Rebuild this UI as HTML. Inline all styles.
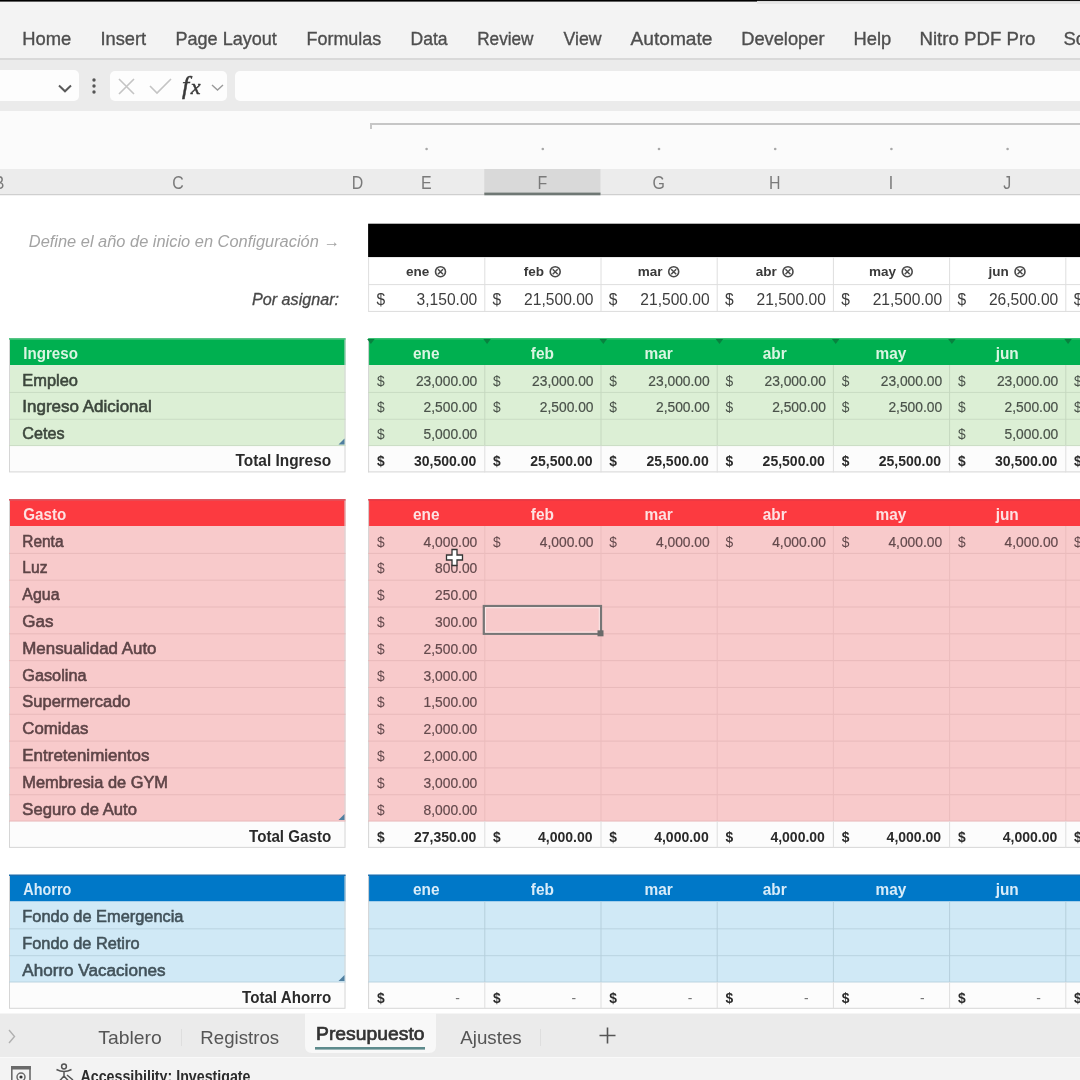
<!DOCTYPE html>
<html><head><meta charset="utf-8"><title>Presupuesto - Excel</title>
<style>
html,body{margin:0;padding:0;background:#fff;width:1080px;height:1080px;overflow:hidden;}
svg{display:block;filter:blur(0.45px);font-family:"Liberation Sans",sans-serif;}
</style></head><body>
<svg width="1080" height="1080" viewBox="0 0 1080 1080">
<rect x="0.00" y="0.00" width="1080.00" height="1080.00" fill="#ffffff" />
<rect x="0.00" y="0.00" width="1080.00" height="59.00" fill="#f3f3f3" />
<rect x="0.00" y="0.00" width="757.00" height="1.60" fill="#000000" />
<rect x="757.00" y="0.00" width="323.00" height="1.10" fill="#111111" />
<rect x="757.00" y="2.00" width="323.00" height="2.00" fill="#e6e6e6" />
<text x="22.20" y="45.00" font-size="18.5" fill="#4e4e4e" textLength="49.00" lengthAdjust="spacingAndGlyphs" stroke="#4e4e4e" stroke-width="0.35">Home</text>
<text x="100.50" y="45.00" font-size="18.5" fill="#4e4e4e" textLength="45.70" lengthAdjust="spacingAndGlyphs" stroke="#4e4e4e" stroke-width="0.35">Insert</text>
<text x="175.50" y="45.00" font-size="18.5" fill="#4e4e4e" textLength="101.30" lengthAdjust="spacingAndGlyphs" stroke="#4e4e4e" stroke-width="0.35">Page Layout</text>
<text x="306.50" y="45.00" font-size="18.5" fill="#4e4e4e" textLength="74.70" lengthAdjust="spacingAndGlyphs" stroke="#4e4e4e" stroke-width="0.35">Formulas</text>
<text x="410.50" y="45.00" font-size="18.5" fill="#4e4e4e" textLength="37.00" lengthAdjust="spacingAndGlyphs" stroke="#4e4e4e" stroke-width="0.35">Data</text>
<text x="477.20" y="45.00" font-size="18.5" fill="#4e4e4e" textLength="56.30" lengthAdjust="spacingAndGlyphs" stroke="#4e4e4e" stroke-width="0.35">Review</text>
<text x="563.50" y="45.00" font-size="18.5" fill="#4e4e4e" textLength="38.00" lengthAdjust="spacingAndGlyphs" stroke="#4e4e4e" stroke-width="0.35">View</text>
<text x="630.50" y="45.00" font-size="18.5" fill="#4e4e4e" textLength="82.00" lengthAdjust="spacingAndGlyphs" stroke="#4e4e4e" stroke-width="0.35">Automate</text>
<text x="741.20" y="45.00" font-size="18.5" fill="#4e4e4e" textLength="83.30" lengthAdjust="spacingAndGlyphs" stroke="#4e4e4e" stroke-width="0.35">Developer</text>
<text x="853.50" y="45.00" font-size="18.5" fill="#4e4e4e" textLength="37.70" lengthAdjust="spacingAndGlyphs" stroke="#4e4e4e" stroke-width="0.35">Help</text>
<text x="919.50" y="45.00" font-size="18.5" fill="#4e4e4e" textLength="116.00" lengthAdjust="spacingAndGlyphs" stroke="#4e4e4e" stroke-width="0.35">Nitro PDF Pro</text>
<text x="1063.50" y="45.00" font-size="18.5" fill="#4e4e4e" stroke="#4e4e4e" stroke-width="0.35">Sc</text>
<rect x="0.00" y="58.00" width="1080.00" height="2.00" fill="#d9d9d9" />
<rect x="0.00" y="60.00" width="1080.00" height="51.00" fill="#ebebeb" />
<rect x="-6" y="70" width="85" height="31" rx="5" fill="#fdfdfd"/>
<path d="M59 85.5 L65 91.3 L71 85.5" fill="none" stroke="#5a5a5a" stroke-width="2"/>
<circle cx="94" cy="80" r="1.7" fill="#555"/>
<circle cx="94" cy="86" r="1.7" fill="#555"/>
<circle cx="94" cy="92" r="1.7" fill="#555"/>
<rect x="110" y="71" width="117" height="30" rx="5" fill="#fdfdfd"/>
<path d="M119 79 L134 94 M134 79 L119 94" stroke="#c4c4c4" stroke-width="1.6" fill="none"/>
<path d="M150 86 L157 93 L171 79" stroke="#c4c4c4" stroke-width="1.6" fill="none"/>
<text x="182" y="94" font-family="Liberation Serif" font-style="italic" fill="#3a3a3a" stroke="#3a3a3a" stroke-width="0.5"><tspan font-size="26">f</tspan><tspan font-size="22" dx="1.5">x</tspan></text>
<path d="M212 85 L217.5 90 L223 85" fill="none" stroke="#9a9a9a" stroke-width="1.4"/>
<rect x="235" y="71" width="860" height="30" rx="5" fill="#fdfdfd"/>
<rect x="0.00" y="111.00" width="1080.00" height="58.00" fill="#fbfbfb" />
<rect x="370.00" y="123.00" width="710.00" height="2.00" fill="#c6c6c6" />
<rect x="370.00" y="123.00" width="2.00" height="6.00" fill="#c6c6c6" />
<circle cx="426.6" cy="149" r="1.3" fill="#a8a8a8"/>
<circle cx="542.8" cy="149" r="1.3" fill="#a8a8a8"/>
<circle cx="659.0" cy="149" r="1.3" fill="#a8a8a8"/>
<circle cx="775.2" cy="149" r="1.3" fill="#a8a8a8"/>
<circle cx="891.4" cy="149" r="1.3" fill="#a8a8a8"/>
<circle cx="1007.6" cy="149" r="1.3" fill="#a8a8a8"/>
<rect x="0.00" y="169.00" width="1080.00" height="26.00" fill="#ececec" />
<rect x="0.00" y="194.00" width="1080.00" height="1.50" fill="#cfcfcf" />
<rect x="484.30" y="169.00" width="116.20" height="26.00" fill="#d9d9d9" />
<rect x="484.30" y="192.60" width="116.20" height="3.00" fill="#6f7874" />
<text x="-1.00" y="189.00" font-size="18.5" fill="#7a7a7a" text-anchor="middle" textLength="10.61" lengthAdjust="spacingAndGlyphs" >B</text>
<text x="178.00" y="189.00" font-size="18.5" fill="#7a7a7a" text-anchor="middle" textLength="11.49" lengthAdjust="spacingAndGlyphs" >C</text>
<text x="357.50" y="189.00" font-size="18.5" fill="#7a7a7a" text-anchor="middle" textLength="11.49" lengthAdjust="spacingAndGlyphs" >D</text>
<text x="426.20" y="189.00" font-size="18.5" fill="#7a7a7a" text-anchor="middle" textLength="10.61" lengthAdjust="spacingAndGlyphs" >E</text>
<text x="542.40" y="189.00" font-size="18.5" fill="#7a7a7a" text-anchor="middle" textLength="9.72" lengthAdjust="spacingAndGlyphs" >F</text>
<text x="658.60" y="189.00" font-size="18.5" fill="#7a7a7a" text-anchor="middle" textLength="12.38" lengthAdjust="spacingAndGlyphs" >G</text>
<text x="774.80" y="189.00" font-size="18.5" fill="#7a7a7a" text-anchor="middle" textLength="11.49" lengthAdjust="spacingAndGlyphs" >H</text>
<text x="891.00" y="189.00" font-size="18.5" fill="#7a7a7a" text-anchor="middle" textLength="4.42" lengthAdjust="spacingAndGlyphs" >I</text>
<text x="1007.20" y="189.00" font-size="18.5" fill="#7a7a7a" text-anchor="middle" textLength="7.96" lengthAdjust="spacingAndGlyphs" >J</text>
<rect x="0.00" y="195.50" width="1080.00" height="817.00" fill="#ffffff" />
<rect x="368.10" y="223.70" width="711.90" height="33.60" fill="#000000" />
<text x="28.80" y="246.50" font-size="16.3" fill="#a3a3a3" font-style="italic" textLength="311.00" lengthAdjust="spacingAndGlyphs" >Define el año de inicio en Configuración →</text>
<text x="339.00" y="305.00" font-size="16.3" fill="#474747" font-style="italic" text-anchor="end" textLength="87.00" lengthAdjust="spacingAndGlyphs" stroke="#474747" stroke-width="0.3">Por asignar:</text>
<rect x="368.10" y="257.30" width="711.90" height="54.10" fill="#ffffff" />
<line x1="368.10" y1="284.60" x2="1080.00" y2="284.60" stroke="#dedede" stroke-width="1" />
<line x1="368.10" y1="311.40" x2="1080.00" y2="311.40" stroke="#dcdcdc" stroke-width="1" />
<line x1="368.60" y1="257.30" x2="368.60" y2="311.40" stroke="#dedede" stroke-width="1" />
<line x1="484.80" y1="257.30" x2="484.80" y2="311.40" stroke="#dedede" stroke-width="1" />
<line x1="601.00" y1="257.30" x2="601.00" y2="311.40" stroke="#dedede" stroke-width="1" />
<line x1="717.20" y1="257.30" x2="717.20" y2="311.40" stroke="#dedede" stroke-width="1" />
<line x1="833.40" y1="257.30" x2="833.40" y2="311.40" stroke="#dedede" stroke-width="1" />
<line x1="949.60" y1="257.30" x2="949.60" y2="311.40" stroke="#dedede" stroke-width="1" />
<line x1="1065.80" y1="257.30" x2="1065.80" y2="311.40" stroke="#dedede" stroke-width="1" />
<text x="406.07" y="276.00" font-size="13.5" fill="#3a3a3a" font-weight="bold" >ene</text>
<g transform="translate(440.5,271.7)"><circle r="5" fill="none" stroke="#4a4a4a" stroke-width="1.6"/><path d="M-2.5 -2.5 L2.5 2.5 M2.5 -2.5 L-2.5 2.5" stroke="#4a4a4a" stroke-width="1.5"/></g>
<text x="376.40" y="305.20" font-size="16.5" fill="#3e3e3e" textLength="8.68" lengthAdjust="spacingAndGlyphs" >$</text>
<text x="477.30" y="305.20" font-size="16.5" fill="#3e3e3e" text-anchor="end" textLength="60.72" lengthAdjust="spacingAndGlyphs" >3,150.00</text>
<text x="523.77" y="276.00" font-size="13.5" fill="#3a3a3a" font-weight="bold" >feb</text>
<g transform="translate(555.2,271.7)"><circle r="5" fill="none" stroke="#4a4a4a" stroke-width="1.6"/><path d="M-2.5 -2.5 L2.5 2.5 M2.5 -2.5 L-2.5 2.5" stroke="#4a4a4a" stroke-width="1.5"/></g>
<text x="492.60" y="305.20" font-size="16.5" fill="#3e3e3e" textLength="8.68" lengthAdjust="spacingAndGlyphs" >$</text>
<text x="593.50" y="305.20" font-size="16.5" fill="#3e3e3e" text-anchor="end" textLength="69.40" lengthAdjust="spacingAndGlyphs" >21,500.00</text>
<text x="637.72" y="276.00" font-size="13.5" fill="#3a3a3a" font-weight="bold" >mar</text>
<g transform="translate(673.7,271.7)"><circle r="5" fill="none" stroke="#4a4a4a" stroke-width="1.6"/><path d="M-2.5 -2.5 L2.5 2.5 M2.5 -2.5 L-2.5 2.5" stroke="#4a4a4a" stroke-width="1.5"/></g>
<text x="608.80" y="305.20" font-size="16.5" fill="#3e3e3e" textLength="8.68" lengthAdjust="spacingAndGlyphs" >$</text>
<text x="709.70" y="305.20" font-size="16.5" fill="#3e3e3e" text-anchor="end" textLength="69.40" lengthAdjust="spacingAndGlyphs" >21,500.00</text>
<text x="755.80" y="276.00" font-size="13.5" fill="#3a3a3a" font-weight="bold" >abr</text>
<g transform="translate(788.0,271.7)"><circle r="5" fill="none" stroke="#4a4a4a" stroke-width="1.6"/><path d="M-2.5 -2.5 L2.5 2.5 M2.5 -2.5 L-2.5 2.5" stroke="#4a4a4a" stroke-width="1.5"/></g>
<text x="725.00" y="305.20" font-size="16.5" fill="#3e3e3e" textLength="8.68" lengthAdjust="spacingAndGlyphs" >$</text>
<text x="825.90" y="305.20" font-size="16.5" fill="#3e3e3e" text-anchor="end" textLength="69.40" lengthAdjust="spacingAndGlyphs" >21,500.00</text>
<text x="868.99" y="276.00" font-size="13.5" fill="#3a3a3a" font-weight="bold" >may</text>
<g transform="translate(907.2,271.7)"><circle r="5" fill="none" stroke="#4a4a4a" stroke-width="1.6"/><path d="M-2.5 -2.5 L2.5 2.5 M2.5 -2.5 L-2.5 2.5" stroke="#4a4a4a" stroke-width="1.5"/></g>
<text x="841.20" y="305.20" font-size="16.5" fill="#3e3e3e" textLength="8.68" lengthAdjust="spacingAndGlyphs" >$</text>
<text x="942.10" y="305.20" font-size="16.5" fill="#3e3e3e" text-anchor="end" textLength="69.40" lengthAdjust="spacingAndGlyphs" >21,500.00</text>
<text x="988.58" y="276.00" font-size="13.5" fill="#3a3a3a" font-weight="bold" >jun</text>
<g transform="translate(1020.0,271.7)"><circle r="5" fill="none" stroke="#4a4a4a" stroke-width="1.6"/><path d="M-2.5 -2.5 L2.5 2.5 M2.5 -2.5 L-2.5 2.5" stroke="#4a4a4a" stroke-width="1.5"/></g>
<text x="957.40" y="305.20" font-size="16.5" fill="#3e3e3e" textLength="8.68" lengthAdjust="spacingAndGlyphs" >$</text>
<text x="1058.30" y="305.20" font-size="16.5" fill="#3e3e3e" text-anchor="end" textLength="69.40" lengthAdjust="spacingAndGlyphs" >26,500.00</text>
<text x="1073.80" y="305.20" font-size="15.6" fill="#3e3e3e" >$</text>
<rect x="9.00" y="338.30" width="336.50" height="26.82" fill="#00b050" />
<rect x="9.00" y="365.12" width="336.50" height="80.46" fill="#dcefd5" />
<rect x="9.00" y="445.58" width="336.50" height="26.82" fill="#fcfcfc" />
<rect x="9.50" y="338.80" width="335.50" height="133.10" fill="none" stroke="#d6d6d6" stroke-width="1"/>
<line x1="9.00" y1="392.44" x2="345.50" y2="392.44" stroke="#c9dcc3" stroke-width="1" />
<line x1="9.00" y1="419.26" x2="345.50" y2="419.26" stroke="#c9dcc3" stroke-width="1" />
<line x1="9.00" y1="445.58" x2="345.50" y2="445.58" stroke="#c9dcc3" stroke-width="1" />
<text x="23.30" y="358.60" font-size="17" fill="#daf5e2" font-weight="bold" textLength="54.60" lengthAdjust="spacingAndGlyphs" >Ingreso</text>
<text x="22.30" y="385.62" font-size="17" fill="#3c463c" textLength="55.70" lengthAdjust="spacingAndGlyphs" stroke="#3c463c" stroke-width="0.6">Empleo</text>
<text x="22.30" y="412.44" font-size="17" fill="#3c463c" stroke="#3c463c" stroke-width="0.6">Ingreso Adicional</text>
<text x="22.30" y="439.26" font-size="17" fill="#3c463c" textLength="42.20" lengthAdjust="spacingAndGlyphs" stroke="#3c463c" stroke-width="0.6">Cetes</text>
<text x="331.20" y="466.10" font-size="17" fill="#2a2a2a" font-weight="bold" text-anchor="end" textLength="95.70" lengthAdjust="spacingAndGlyphs" >Total Ingreso</text>
<rect x="368.10" y="338.30" width="711.90" height="26.82" fill="#00b050" />
<rect x="368.10" y="365.12" width="711.90" height="80.46" fill="#dcefd5" />
<rect x="368.10" y="445.58" width="711.90" height="26.82" fill="#fcfcfc" />
<line x1="368.60" y1="338.30" x2="368.60" y2="472.40" stroke="#d6d6d6" stroke-width="1"/>
<line x1="368.10" y1="392.44" x2="1080.00" y2="392.44" stroke="#c9dcc3" stroke-width="1" />
<line x1="368.10" y1="419.26" x2="1080.00" y2="419.26" stroke="#c9dcc3" stroke-width="1" />
<line x1="368.10" y1="445.58" x2="1080.00" y2="445.58" stroke="#c9dcc3" stroke-width="1" />
<line x1="368.10" y1="471.90" x2="1080.00" y2="471.90" stroke="#d6d6d6" stroke-width="1" />
<line x1="484.80" y1="365.12" x2="484.80" y2="445.58" stroke="#c5d8bf" stroke-width="1" />
<line x1="484.80" y1="445.58" x2="484.80" y2="472.40" stroke="#dedede" stroke-width="1" />
<line x1="601.00" y1="365.12" x2="601.00" y2="445.58" stroke="#c5d8bf" stroke-width="1" />
<line x1="601.00" y1="445.58" x2="601.00" y2="472.40" stroke="#dedede" stroke-width="1" />
<line x1="717.20" y1="365.12" x2="717.20" y2="445.58" stroke="#c5d8bf" stroke-width="1" />
<line x1="717.20" y1="445.58" x2="717.20" y2="472.40" stroke="#dedede" stroke-width="1" />
<line x1="833.40" y1="365.12" x2="833.40" y2="445.58" stroke="#c5d8bf" stroke-width="1" />
<line x1="833.40" y1="445.58" x2="833.40" y2="472.40" stroke="#dedede" stroke-width="1" />
<line x1="949.60" y1="365.12" x2="949.60" y2="445.58" stroke="#c5d8bf" stroke-width="1" />
<line x1="949.60" y1="445.58" x2="949.60" y2="472.40" stroke="#dedede" stroke-width="1" />
<line x1="1065.80" y1="365.12" x2="1065.80" y2="445.58" stroke="#c5d8bf" stroke-width="1" />
<line x1="1065.80" y1="445.58" x2="1065.80" y2="472.40" stroke="#dedede" stroke-width="1" />
<text x="426.20" y="358.60" font-size="17" fill="#daf5e2" font-weight="bold" text-anchor="middle" textLength="26.54" lengthAdjust="spacingAndGlyphs" >ene</text>
<text x="542.40" y="358.60" font-size="17" fill="#daf5e2" font-weight="bold" text-anchor="middle" textLength="23.10" lengthAdjust="spacingAndGlyphs" >feb</text>
<text x="658.60" y="358.60" font-size="17" fill="#daf5e2" font-weight="bold" text-anchor="middle" textLength="28.25" lengthAdjust="spacingAndGlyphs" >mar</text>
<text x="774.80" y="358.60" font-size="17" fill="#daf5e2" font-weight="bold" text-anchor="middle" textLength="23.96" lengthAdjust="spacingAndGlyphs" >abr</text>
<text x="891.00" y="358.60" font-size="17" fill="#daf5e2" font-weight="bold" text-anchor="middle" textLength="30.82" lengthAdjust="spacingAndGlyphs" >may</text>
<text x="1007.20" y="358.60" font-size="17" fill="#daf5e2" font-weight="bold" text-anchor="middle" textLength="23.09" lengthAdjust="spacingAndGlyphs" >jun</text>
<rect x="9.00" y="338.30" width="336.50" height="1.30" fill="#2fbf6c" />
<rect x="368.10" y="338.30" width="711.90" height="1.30" fill="#2fbf6c" />
<path d="M367.1 339.1 h7.5 l-3.7 5 z" fill="#08823f"/>
<path d="M483.3 339.1 h7.5 l-3.7 5 z" fill="#08823f"/>
<path d="M599.5 339.1 h7.5 l-3.7 5 z" fill="#08823f"/>
<path d="M715.7 339.1 h7.5 l-3.7 5 z" fill="#08823f"/>
<path d="M831.9 339.1 h7.5 l-3.7 5 z" fill="#08823f"/>
<path d="M948.1 339.1 h7.5 l-3.7 5 z" fill="#08823f"/>
<path d="M1064.3 339.1 h7.5 l-3.7 5 z" fill="#08823f"/>
<text x="376.90" y="385.62" font-size="13.8" fill="#4a524a" >$</text>
<text x="477.30" y="385.62" font-size="13.8" fill="#4a524a" text-anchor="end" stroke="#4a524a" stroke-width="0.2">23,000.00</text>
<text x="493.10" y="385.62" font-size="13.8" fill="#4a524a" >$</text>
<text x="593.50" y="385.62" font-size="13.8" fill="#4a524a" text-anchor="end" stroke="#4a524a" stroke-width="0.2">23,000.00</text>
<text x="609.30" y="385.62" font-size="13.8" fill="#4a524a" >$</text>
<text x="709.70" y="385.62" font-size="13.8" fill="#4a524a" text-anchor="end" stroke="#4a524a" stroke-width="0.2">23,000.00</text>
<text x="725.50" y="385.62" font-size="13.8" fill="#4a524a" >$</text>
<text x="825.90" y="385.62" font-size="13.8" fill="#4a524a" text-anchor="end" stroke="#4a524a" stroke-width="0.2">23,000.00</text>
<text x="841.70" y="385.62" font-size="13.8" fill="#4a524a" >$</text>
<text x="942.10" y="385.62" font-size="13.8" fill="#4a524a" text-anchor="end" stroke="#4a524a" stroke-width="0.2">23,000.00</text>
<text x="957.90" y="385.62" font-size="13.8" fill="#4a524a" >$</text>
<text x="1058.30" y="385.62" font-size="13.8" fill="#4a524a" text-anchor="end" stroke="#4a524a" stroke-width="0.2">23,000.00</text>
<text x="1074.10" y="385.62" font-size="13.8" fill="#4a524a" >$</text>
<text x="376.90" y="412.44" font-size="13.8" fill="#4a524a" >$</text>
<text x="477.30" y="412.44" font-size="13.8" fill="#4a524a" text-anchor="end" stroke="#4a524a" stroke-width="0.2">2,500.00</text>
<text x="493.10" y="412.44" font-size="13.8" fill="#4a524a" >$</text>
<text x="593.50" y="412.44" font-size="13.8" fill="#4a524a" text-anchor="end" stroke="#4a524a" stroke-width="0.2">2,500.00</text>
<text x="609.30" y="412.44" font-size="13.8" fill="#4a524a" >$</text>
<text x="709.70" y="412.44" font-size="13.8" fill="#4a524a" text-anchor="end" stroke="#4a524a" stroke-width="0.2">2,500.00</text>
<text x="725.50" y="412.44" font-size="13.8" fill="#4a524a" >$</text>
<text x="825.90" y="412.44" font-size="13.8" fill="#4a524a" text-anchor="end" stroke="#4a524a" stroke-width="0.2">2,500.00</text>
<text x="841.70" y="412.44" font-size="13.8" fill="#4a524a" >$</text>
<text x="942.10" y="412.44" font-size="13.8" fill="#4a524a" text-anchor="end" stroke="#4a524a" stroke-width="0.2">2,500.00</text>
<text x="957.90" y="412.44" font-size="13.8" fill="#4a524a" >$</text>
<text x="1058.30" y="412.44" font-size="13.8" fill="#4a524a" text-anchor="end" stroke="#4a524a" stroke-width="0.2">2,500.00</text>
<text x="1074.10" y="412.44" font-size="13.8" fill="#4a524a" >$</text>
<text x="376.90" y="439.26" font-size="13.8" fill="#4a524a" >$</text>
<text x="477.30" y="439.26" font-size="13.8" fill="#4a524a" text-anchor="end" stroke="#4a524a" stroke-width="0.2">5,000.00</text>
<text x="957.90" y="439.26" font-size="13.8" fill="#4a524a" >$</text>
<text x="1058.30" y="439.26" font-size="13.8" fill="#4a524a" text-anchor="end" stroke="#4a524a" stroke-width="0.2">5,000.00</text>
<text x="376.90" y="466.10" font-size="13.8" fill="#2a2a2a" font-weight="bold" >$</text>
<text x="476.30" y="466.10" font-size="14" fill="#2a2a2a" font-weight="bold" text-anchor="end" >30,500.00</text>
<text x="493.10" y="466.10" font-size="13.8" fill="#2a2a2a" font-weight="bold" >$</text>
<text x="592.50" y="466.10" font-size="14" fill="#2a2a2a" font-weight="bold" text-anchor="end" >25,500.00</text>
<text x="609.30" y="466.10" font-size="13.8" fill="#2a2a2a" font-weight="bold" >$</text>
<text x="708.70" y="466.10" font-size="14" fill="#2a2a2a" font-weight="bold" text-anchor="end" >25,500.00</text>
<text x="725.50" y="466.10" font-size="13.8" fill="#2a2a2a" font-weight="bold" >$</text>
<text x="824.90" y="466.10" font-size="14" fill="#2a2a2a" font-weight="bold" text-anchor="end" >25,500.00</text>
<text x="841.70" y="466.10" font-size="13.8" fill="#2a2a2a" font-weight="bold" >$</text>
<text x="941.10" y="466.10" font-size="14" fill="#2a2a2a" font-weight="bold" text-anchor="end" >25,500.00</text>
<text x="957.90" y="466.10" font-size="13.8" fill="#2a2a2a" font-weight="bold" >$</text>
<text x="1057.30" y="466.10" font-size="14" fill="#2a2a2a" font-weight="bold" text-anchor="end" >30,500.00</text>
<text x="1074.10" y="466.10" font-size="13.8" fill="#2a2a2a" font-weight="bold" >$</text>
<path d="M344.5 438.6 L344.5 444.6 L338.5 444.6 Z" fill="#4f7fa0"/>
<rect x="9.00" y="499.22" width="336.50" height="26.82" fill="#fc3a40" />
<rect x="9.00" y="526.04" width="336.50" height="295.02" fill="#f8cacb" />
<rect x="9.00" y="821.06" width="336.50" height="26.82" fill="#fcfcfc" />
<rect x="9.50" y="499.72" width="335.50" height="347.66" fill="none" stroke="#d6d6d6" stroke-width="1"/>
<line x1="9.00" y1="553.36" x2="345.50" y2="553.36" stroke="#e8b9ba" stroke-width="1" />
<line x1="9.00" y1="580.18" x2="345.50" y2="580.18" stroke="#e8b9ba" stroke-width="1" />
<line x1="9.00" y1="607.00" x2="345.50" y2="607.00" stroke="#e8b9ba" stroke-width="1" />
<line x1="9.00" y1="633.82" x2="345.50" y2="633.82" stroke="#e8b9ba" stroke-width="1" />
<line x1="9.00" y1="660.64" x2="345.50" y2="660.64" stroke="#e8b9ba" stroke-width="1" />
<line x1="9.00" y1="687.46" x2="345.50" y2="687.46" stroke="#e8b9ba" stroke-width="1" />
<line x1="9.00" y1="714.28" x2="345.50" y2="714.28" stroke="#e8b9ba" stroke-width="1" />
<line x1="9.00" y1="741.10" x2="345.50" y2="741.10" stroke="#e8b9ba" stroke-width="1" />
<line x1="9.00" y1="767.92" x2="345.50" y2="767.92" stroke="#e8b9ba" stroke-width="1" />
<line x1="9.00" y1="794.74" x2="345.50" y2="794.74" stroke="#e8b9ba" stroke-width="1" />
<line x1="9.00" y1="821.06" x2="345.50" y2="821.06" stroke="#e8b9ba" stroke-width="1" />
<text x="23.30" y="519.52" font-size="17" fill="#fde2e2" font-weight="bold" textLength="43.00" lengthAdjust="spacingAndGlyphs" >Gasto</text>
<text x="22.30" y="546.54" font-size="17" fill="#5e4447" textLength="41.20" lengthAdjust="spacingAndGlyphs" stroke="#5e4447" stroke-width="0.6">Renta</text>
<text x="22.30" y="573.36" font-size="17" fill="#5e4447" textLength="25.20" lengthAdjust="spacingAndGlyphs" stroke="#5e4447" stroke-width="0.6">Luz</text>
<text x="22.30" y="600.18" font-size="17" fill="#5e4447" textLength="37.20" lengthAdjust="spacingAndGlyphs" stroke="#5e4447" stroke-width="0.6">Agua</text>
<text x="22.30" y="627.00" font-size="17" fill="#5e4447" stroke="#5e4447" stroke-width="0.6">Gas</text>
<text x="22.30" y="653.82" font-size="17" fill="#5e4447" textLength="134.20" lengthAdjust="spacingAndGlyphs" stroke="#5e4447" stroke-width="0.6">Mensualidad Auto</text>
<text x="22.30" y="680.64" font-size="17" fill="#5e4447" textLength="64.20" lengthAdjust="spacingAndGlyphs" stroke="#5e4447" stroke-width="0.6">Gasolina</text>
<text x="22.30" y="707.46" font-size="17" fill="#5e4447" textLength="108.20" lengthAdjust="spacingAndGlyphs" stroke="#5e4447" stroke-width="0.6">Supermercado</text>
<text x="22.30" y="734.28" font-size="17" fill="#5e4447" textLength="66.20" lengthAdjust="spacingAndGlyphs" stroke="#5e4447" stroke-width="0.6">Comidas</text>
<text x="22.30" y="761.10" font-size="17" fill="#5e4447" textLength="127.20" lengthAdjust="spacingAndGlyphs" stroke="#5e4447" stroke-width="0.6">Entretenimientos</text>
<text x="22.30" y="787.92" font-size="17" fill="#5e4447" textLength="145.70" lengthAdjust="spacingAndGlyphs" stroke="#5e4447" stroke-width="0.6">Membresia de GYM</text>
<text x="22.30" y="814.74" font-size="17" fill="#5e4447" textLength="114.70" lengthAdjust="spacingAndGlyphs" stroke="#5e4447" stroke-width="0.6">Seguro de Auto</text>
<text x="331.20" y="841.58" font-size="17" fill="#2a2a2a" font-weight="bold" text-anchor="end" textLength="82.20" lengthAdjust="spacingAndGlyphs" >Total Gasto</text>
<rect x="368.10" y="499.22" width="711.90" height="26.82" fill="#fc3a40" />
<rect x="368.10" y="526.04" width="711.90" height="295.02" fill="#f8cacb" />
<rect x="368.10" y="821.06" width="711.90" height="26.82" fill="#fcfcfc" />
<line x1="368.60" y1="499.22" x2="368.60" y2="847.88" stroke="#d6d6d6" stroke-width="1"/>
<line x1="368.10" y1="553.36" x2="1080.00" y2="553.36" stroke="#e8b9ba" stroke-width="1" />
<line x1="368.10" y1="580.18" x2="1080.00" y2="580.18" stroke="#e8b9ba" stroke-width="1" />
<line x1="368.10" y1="607.00" x2="1080.00" y2="607.00" stroke="#e8b9ba" stroke-width="1" />
<line x1="368.10" y1="633.82" x2="1080.00" y2="633.82" stroke="#e8b9ba" stroke-width="1" />
<line x1="368.10" y1="660.64" x2="1080.00" y2="660.64" stroke="#e8b9ba" stroke-width="1" />
<line x1="368.10" y1="687.46" x2="1080.00" y2="687.46" stroke="#e8b9ba" stroke-width="1" />
<line x1="368.10" y1="714.28" x2="1080.00" y2="714.28" stroke="#e8b9ba" stroke-width="1" />
<line x1="368.10" y1="741.10" x2="1080.00" y2="741.10" stroke="#e8b9ba" stroke-width="1" />
<line x1="368.10" y1="767.92" x2="1080.00" y2="767.92" stroke="#e8b9ba" stroke-width="1" />
<line x1="368.10" y1="794.74" x2="1080.00" y2="794.74" stroke="#e8b9ba" stroke-width="1" />
<line x1="368.10" y1="821.06" x2="1080.00" y2="821.06" stroke="#e8b9ba" stroke-width="1" />
<line x1="368.10" y1="847.38" x2="1080.00" y2="847.38" stroke="#d6d6d6" stroke-width="1" />
<line x1="484.80" y1="526.04" x2="484.80" y2="821.06" stroke="#ebbcbd" stroke-width="1" />
<line x1="484.80" y1="821.06" x2="484.80" y2="847.88" stroke="#dedede" stroke-width="1" />
<line x1="601.00" y1="526.04" x2="601.00" y2="821.06" stroke="#ebbcbd" stroke-width="1" />
<line x1="601.00" y1="821.06" x2="601.00" y2="847.88" stroke="#dedede" stroke-width="1" />
<line x1="717.20" y1="526.04" x2="717.20" y2="821.06" stroke="#ebbcbd" stroke-width="1" />
<line x1="717.20" y1="821.06" x2="717.20" y2="847.88" stroke="#dedede" stroke-width="1" />
<line x1="833.40" y1="526.04" x2="833.40" y2="821.06" stroke="#ebbcbd" stroke-width="1" />
<line x1="833.40" y1="821.06" x2="833.40" y2="847.88" stroke="#dedede" stroke-width="1" />
<line x1="949.60" y1="526.04" x2="949.60" y2="821.06" stroke="#ebbcbd" stroke-width="1" />
<line x1="949.60" y1="821.06" x2="949.60" y2="847.88" stroke="#dedede" stroke-width="1" />
<line x1="1065.80" y1="526.04" x2="1065.80" y2="821.06" stroke="#ebbcbd" stroke-width="1" />
<line x1="1065.80" y1="821.06" x2="1065.80" y2="847.88" stroke="#dedede" stroke-width="1" />
<text x="426.20" y="519.52" font-size="17" fill="#fde2e2" font-weight="bold" text-anchor="middle" textLength="26.54" lengthAdjust="spacingAndGlyphs" >ene</text>
<text x="542.40" y="519.52" font-size="17" fill="#fde2e2" font-weight="bold" text-anchor="middle" textLength="23.10" lengthAdjust="spacingAndGlyphs" >feb</text>
<text x="658.60" y="519.52" font-size="17" fill="#fde2e2" font-weight="bold" text-anchor="middle" textLength="28.25" lengthAdjust="spacingAndGlyphs" >mar</text>
<text x="774.80" y="519.52" font-size="17" fill="#fde2e2" font-weight="bold" text-anchor="middle" textLength="23.96" lengthAdjust="spacingAndGlyphs" >abr</text>
<text x="891.00" y="519.52" font-size="17" fill="#fde2e2" font-weight="bold" text-anchor="middle" textLength="30.82" lengthAdjust="spacingAndGlyphs" >may</text>
<text x="1007.20" y="519.52" font-size="17" fill="#fde2e2" font-weight="bold" text-anchor="middle" textLength="23.09" lengthAdjust="spacingAndGlyphs" >jun</text>
<rect x="9.00" y="499.22" width="336.50" height="1.30" fill="#de3a48" />
<rect x="368.10" y="499.22" width="711.90" height="1.30" fill="#de3a48" />
<text x="376.90" y="546.54" font-size="13.8" fill="#644a4d" >$</text>
<text x="477.30" y="546.54" font-size="13.8" fill="#644a4d" text-anchor="end" stroke="#644a4d" stroke-width="0.2">4,000.00</text>
<text x="493.10" y="546.54" font-size="13.8" fill="#644a4d" >$</text>
<text x="593.50" y="546.54" font-size="13.8" fill="#644a4d" text-anchor="end" stroke="#644a4d" stroke-width="0.2">4,000.00</text>
<text x="609.30" y="546.54" font-size="13.8" fill="#644a4d" >$</text>
<text x="709.70" y="546.54" font-size="13.8" fill="#644a4d" text-anchor="end" stroke="#644a4d" stroke-width="0.2">4,000.00</text>
<text x="725.50" y="546.54" font-size="13.8" fill="#644a4d" >$</text>
<text x="825.90" y="546.54" font-size="13.8" fill="#644a4d" text-anchor="end" stroke="#644a4d" stroke-width="0.2">4,000.00</text>
<text x="841.70" y="546.54" font-size="13.8" fill="#644a4d" >$</text>
<text x="942.10" y="546.54" font-size="13.8" fill="#644a4d" text-anchor="end" stroke="#644a4d" stroke-width="0.2">4,000.00</text>
<text x="957.90" y="546.54" font-size="13.8" fill="#644a4d" >$</text>
<text x="1058.30" y="546.54" font-size="13.8" fill="#644a4d" text-anchor="end" stroke="#644a4d" stroke-width="0.2">4,000.00</text>
<text x="1074.10" y="546.54" font-size="13.8" fill="#644a4d" >$</text>
<text x="376.90" y="573.36" font-size="13.8" fill="#644a4d" >$</text>
<text x="477.30" y="573.36" font-size="13.8" fill="#644a4d" text-anchor="end" stroke="#644a4d" stroke-width="0.2">800.00</text>
<text x="376.90" y="600.18" font-size="13.8" fill="#644a4d" >$</text>
<text x="477.30" y="600.18" font-size="13.8" fill="#644a4d" text-anchor="end" stroke="#644a4d" stroke-width="0.2">250.00</text>
<text x="376.90" y="627.00" font-size="13.8" fill="#644a4d" >$</text>
<text x="477.30" y="627.00" font-size="13.8" fill="#644a4d" text-anchor="end" stroke="#644a4d" stroke-width="0.2">300.00</text>
<text x="376.90" y="653.82" font-size="13.8" fill="#644a4d" >$</text>
<text x="477.30" y="653.82" font-size="13.8" fill="#644a4d" text-anchor="end" stroke="#644a4d" stroke-width="0.2">2,500.00</text>
<text x="376.90" y="680.64" font-size="13.8" fill="#644a4d" >$</text>
<text x="477.30" y="680.64" font-size="13.8" fill="#644a4d" text-anchor="end" stroke="#644a4d" stroke-width="0.2">3,000.00</text>
<text x="376.90" y="707.46" font-size="13.8" fill="#644a4d" >$</text>
<text x="477.30" y="707.46" font-size="13.8" fill="#644a4d" text-anchor="end" stroke="#644a4d" stroke-width="0.2">1,500.00</text>
<text x="376.90" y="734.28" font-size="13.8" fill="#644a4d" >$</text>
<text x="477.30" y="734.28" font-size="13.8" fill="#644a4d" text-anchor="end" stroke="#644a4d" stroke-width="0.2">2,000.00</text>
<text x="376.90" y="761.10" font-size="13.8" fill="#644a4d" >$</text>
<text x="477.30" y="761.10" font-size="13.8" fill="#644a4d" text-anchor="end" stroke="#644a4d" stroke-width="0.2">2,000.00</text>
<text x="376.90" y="787.92" font-size="13.8" fill="#644a4d" >$</text>
<text x="477.30" y="787.92" font-size="13.8" fill="#644a4d" text-anchor="end" stroke="#644a4d" stroke-width="0.2">3,000.00</text>
<text x="376.90" y="814.74" font-size="13.8" fill="#644a4d" >$</text>
<text x="477.30" y="814.74" font-size="13.8" fill="#644a4d" text-anchor="end" stroke="#644a4d" stroke-width="0.2">8,000.00</text>
<text x="376.90" y="841.58" font-size="13.8" fill="#2a2a2a" font-weight="bold" >$</text>
<text x="476.30" y="841.58" font-size="14" fill="#2a2a2a" font-weight="bold" text-anchor="end" >27,350.00</text>
<text x="493.10" y="841.58" font-size="13.8" fill="#2a2a2a" font-weight="bold" >$</text>
<text x="592.50" y="841.58" font-size="14" fill="#2a2a2a" font-weight="bold" text-anchor="end" >4,000.00</text>
<text x="609.30" y="841.58" font-size="13.8" fill="#2a2a2a" font-weight="bold" >$</text>
<text x="708.70" y="841.58" font-size="14" fill="#2a2a2a" font-weight="bold" text-anchor="end" >4,000.00</text>
<text x="725.50" y="841.58" font-size="13.8" fill="#2a2a2a" font-weight="bold" >$</text>
<text x="824.90" y="841.58" font-size="14" fill="#2a2a2a" font-weight="bold" text-anchor="end" >4,000.00</text>
<text x="841.70" y="841.58" font-size="13.8" fill="#2a2a2a" font-weight="bold" >$</text>
<text x="941.10" y="841.58" font-size="14" fill="#2a2a2a" font-weight="bold" text-anchor="end" >4,000.00</text>
<text x="957.90" y="841.58" font-size="13.8" fill="#2a2a2a" font-weight="bold" >$</text>
<text x="1057.30" y="841.58" font-size="14" fill="#2a2a2a" font-weight="bold" text-anchor="end" >4,000.00</text>
<text x="1074.10" y="841.58" font-size="13.8" fill="#2a2a2a" font-weight="bold" >$</text>
<path d="M344.5 814.1 L344.5 820.1 L338.5 820.1 Z" fill="#4f7fa0"/>
<rect x="9.00" y="874.70" width="336.50" height="26.82" fill="#0078c8" />
<rect x="9.00" y="901.52" width="336.50" height="80.46" fill="#d0e9f6" />
<rect x="9.00" y="981.98" width="336.50" height="26.82" fill="#fcfcfc" />
<rect x="9.50" y="875.20" width="335.50" height="133.10" fill="none" stroke="#d6d6d6" stroke-width="1"/>
<line x1="9.00" y1="928.84" x2="345.50" y2="928.84" stroke="#b9d3e0" stroke-width="1" />
<line x1="9.00" y1="955.66" x2="345.50" y2="955.66" stroke="#b9d3e0" stroke-width="1" />
<line x1="9.00" y1="981.98" x2="345.50" y2="981.98" stroke="#b9d3e0" stroke-width="1" />
<text x="23.30" y="895.00" font-size="17" fill="#d8ecf9" font-weight="bold" textLength="48.00" lengthAdjust="spacingAndGlyphs" >Ahorro</text>
<text x="22.30" y="922.02" font-size="17" fill="#42525a" textLength="161.20" lengthAdjust="spacingAndGlyphs" stroke="#42525a" stroke-width="0.6">Fondo de Emergencia</text>
<text x="22.30" y="948.84" font-size="17" fill="#42525a" textLength="117.20" lengthAdjust="spacingAndGlyphs" stroke="#42525a" stroke-width="0.6">Fondo de Retiro</text>
<text x="22.30" y="975.66" font-size="17" fill="#42525a" textLength="143.20" lengthAdjust="spacingAndGlyphs" stroke="#42525a" stroke-width="0.6">Ahorro Vacaciones</text>
<text x="331.20" y="1002.50" font-size="17" fill="#2a2a2a" font-weight="bold" text-anchor="end" textLength="89.20" lengthAdjust="spacingAndGlyphs" >Total Ahorro</text>
<rect x="368.10" y="874.70" width="711.90" height="26.82" fill="#0078c8" />
<rect x="368.10" y="901.52" width="711.90" height="80.46" fill="#d0e9f6" />
<rect x="368.10" y="981.98" width="711.90" height="26.82" fill="#fcfcfc" />
<line x1="368.60" y1="874.70" x2="368.60" y2="1008.80" stroke="#d6d6d6" stroke-width="1"/>
<line x1="368.10" y1="928.84" x2="1080.00" y2="928.84" stroke="#b9d3e0" stroke-width="1" />
<line x1="368.10" y1="955.66" x2="1080.00" y2="955.66" stroke="#b9d3e0" stroke-width="1" />
<line x1="368.10" y1="981.98" x2="1080.00" y2="981.98" stroke="#b9d3e0" stroke-width="1" />
<line x1="368.10" y1="1008.30" x2="1080.00" y2="1008.30" stroke="#d6d6d6" stroke-width="1" />
<line x1="484.80" y1="901.52" x2="484.80" y2="981.98" stroke="#b5cfdc" stroke-width="1" />
<line x1="484.80" y1="981.98" x2="484.80" y2="1008.80" stroke="#dedede" stroke-width="1" />
<line x1="601.00" y1="901.52" x2="601.00" y2="981.98" stroke="#b5cfdc" stroke-width="1" />
<line x1="601.00" y1="981.98" x2="601.00" y2="1008.80" stroke="#dedede" stroke-width="1" />
<line x1="717.20" y1="901.52" x2="717.20" y2="981.98" stroke="#b5cfdc" stroke-width="1" />
<line x1="717.20" y1="981.98" x2="717.20" y2="1008.80" stroke="#dedede" stroke-width="1" />
<line x1="833.40" y1="901.52" x2="833.40" y2="981.98" stroke="#b5cfdc" stroke-width="1" />
<line x1="833.40" y1="981.98" x2="833.40" y2="1008.80" stroke="#dedede" stroke-width="1" />
<line x1="949.60" y1="901.52" x2="949.60" y2="981.98" stroke="#b5cfdc" stroke-width="1" />
<line x1="949.60" y1="981.98" x2="949.60" y2="1008.80" stroke="#dedede" stroke-width="1" />
<line x1="1065.80" y1="901.52" x2="1065.80" y2="981.98" stroke="#b5cfdc" stroke-width="1" />
<line x1="1065.80" y1="981.98" x2="1065.80" y2="1008.80" stroke="#dedede" stroke-width="1" />
<text x="426.20" y="895.00" font-size="17" fill="#d8ecf9" font-weight="bold" text-anchor="middle" textLength="26.54" lengthAdjust="spacingAndGlyphs" >ene</text>
<text x="542.40" y="895.00" font-size="17" fill="#d8ecf9" font-weight="bold" text-anchor="middle" textLength="23.10" lengthAdjust="spacingAndGlyphs" >feb</text>
<text x="658.60" y="895.00" font-size="17" fill="#d8ecf9" font-weight="bold" text-anchor="middle" textLength="28.25" lengthAdjust="spacingAndGlyphs" >mar</text>
<text x="774.80" y="895.00" font-size="17" fill="#d8ecf9" font-weight="bold" text-anchor="middle" textLength="23.96" lengthAdjust="spacingAndGlyphs" >abr</text>
<text x="891.00" y="895.00" font-size="17" fill="#d8ecf9" font-weight="bold" text-anchor="middle" textLength="30.82" lengthAdjust="spacingAndGlyphs" >may</text>
<text x="1007.20" y="895.00" font-size="17" fill="#d8ecf9" font-weight="bold" text-anchor="middle" textLength="23.09" lengthAdjust="spacingAndGlyphs" >jun</text>
<rect x="9.00" y="874.70" width="336.50" height="1.30" fill="#1a6eb0" />
<rect x="368.10" y="874.70" width="711.90" height="1.30" fill="#1a6eb0" />
<text x="376.90" y="1002.50" font-size="13.8" fill="#2a2a2a" font-weight="bold" >$</text>
<text x="457.60" y="1002.50" font-size="13.8" fill="#777777" text-anchor="middle" >-</text>
<text x="493.10" y="1002.50" font-size="13.8" fill="#2a2a2a" font-weight="bold" >$</text>
<text x="573.80" y="1002.50" font-size="13.8" fill="#777777" text-anchor="middle" >-</text>
<text x="609.30" y="1002.50" font-size="13.8" fill="#2a2a2a" font-weight="bold" >$</text>
<text x="690.00" y="1002.50" font-size="13.8" fill="#777777" text-anchor="middle" >-</text>
<text x="725.50" y="1002.50" font-size="13.8" fill="#2a2a2a" font-weight="bold" >$</text>
<text x="806.20" y="1002.50" font-size="13.8" fill="#777777" text-anchor="middle" >-</text>
<text x="841.70" y="1002.50" font-size="13.8" fill="#2a2a2a" font-weight="bold" >$</text>
<text x="922.40" y="1002.50" font-size="13.8" fill="#777777" text-anchor="middle" >-</text>
<text x="957.90" y="1002.50" font-size="13.8" fill="#2a2a2a" font-weight="bold" >$</text>
<text x="1038.60" y="1002.50" font-size="13.8" fill="#777777" text-anchor="middle" >-</text>
<text x="1074.10" y="1002.50" font-size="13.8" fill="#2a2a2a" font-weight="bold" >$</text>
<path d="M344.5 975.0 L344.5 981.0 L338.5 981.0 Z" fill="#4f7fa0"/>
<rect x="483.80" y="606.00" width="117.20" height="27.82" fill="none" stroke="#767676" stroke-width="2.2"/>
<rect x="485.50" y="607.70" width="113.80" height="24.42" fill="none" stroke="#fbe9e9" stroke-width="1"/>
<rect x="597.50" y="630.32" width="6.00" height="6.00" fill="#6a6a6a" />
<path d="M452.0 549.5 h5 v5.5 h5.5 v5 h-5.5 v5.5 h-5 v-5.5 h-5.5 v-5 h5.5 z" fill="#ffffff" stroke="#333" stroke-width="1.3"/>
<rect x="0.00" y="1013.50" width="1080.00" height="43.50" fill="#ebebeb" />
<path d="M305 1013 H436 V1046 Q436 1053 429 1053 H312 Q305 1053 305 1046 Z" fill="#f8f8f8"/>
<path d="M9 1030 L14.5 1036.5 L9 1043" fill="none" stroke="#b0b0b0" stroke-width="1.4"/>
<text x="98.30" y="1044.30" font-size="19" fill="#555555" textLength="63.50" lengthAdjust="spacingAndGlyphs" >Tablero</text>
<line x1="181.50" y1="1029.00" x2="181.50" y2="1046.00" stroke="#dedede" stroke-width="1" />
<text x="200.30" y="1044.30" font-size="19" fill="#555555" textLength="78.80" lengthAdjust="spacingAndGlyphs" >Registros</text>
<text x="316.00" y="1039.50" font-size="19" fill="#333333" textLength="108.50" lengthAdjust="spacingAndGlyphs" stroke="#333333" stroke-width="0.7">Presupuesto</text>
<rect x="315.00" y="1047.00" width="110.00" height="2.60" fill="#5d8a8c" />
<text x="460.30" y="1044.30" font-size="19" fill="#555555" textLength="61.40" lengthAdjust="spacingAndGlyphs" >Ajustes</text>
<line x1="540.50" y1="1029.00" x2="540.50" y2="1046.00" stroke="#dedede" stroke-width="1" />
<path d="M607.5 1027.5 V1043.5 M599.5 1035.5 H615.5" stroke="#555" stroke-width="1.6"/>
<rect x="0.00" y="1057.50" width="1080.00" height="22.50" fill="#f3f3f3" />
<rect x="11.8" y="1066.8" width="18.2" height="16" fill="none" stroke="#6a6a6a" stroke-width="1.6"/>
<rect x="11.00" y="1066.00" width="19.80" height="3.50" fill="#6a6a6a" />
<circle cx="21" cy="1077" r="4" fill="none" stroke="#6a6a6a" stroke-width="1.5"/>
<circle cx="21" cy="1077" r="1.6" fill="#333"/>
<circle cx="64" cy="1066.5" r="2.4" fill="none" stroke="#555" stroke-width="1.5"/>
<path d="M56.5 1069.5 Q64 1073.5 71.5 1069.5 M64 1071.5 V1076 M64 1076 L59.5 1081 M64 1076 L68.5 1081 M67 1075 L73 1080" fill="none" stroke="#555" stroke-width="1.5"/>
<text x="80.50" y="1082.00" font-size="16" fill="#2c2c2c" font-weight="bold" textLength="170.00" lengthAdjust="spacingAndGlyphs" >Accessibility: Investigate</text>
</svg>
</body></html>
